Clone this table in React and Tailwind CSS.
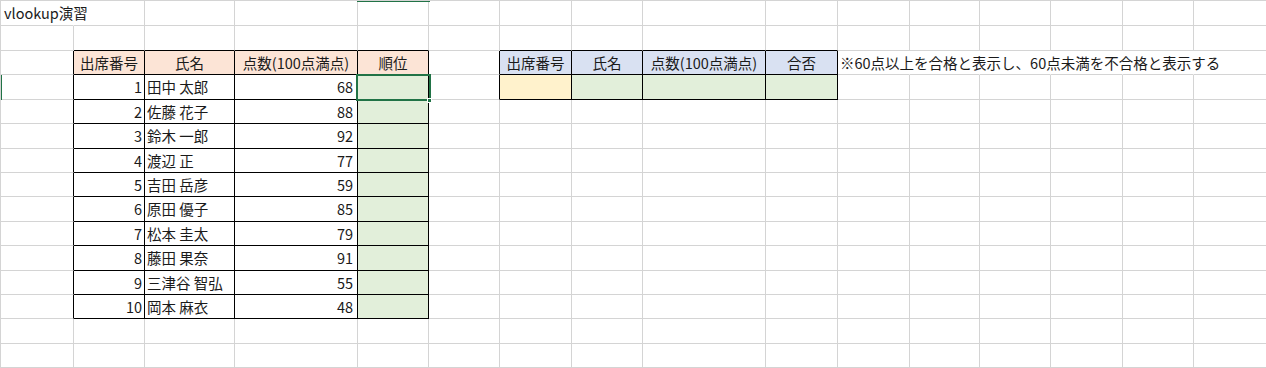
import React from 'react';

const ROWS = 15;
const COLS = 16;

const students = [
  [1, '田中 太郎', 68],
  [2, '佐藤 花子', 88],
  [3, '鈴木 一郎', 92],
  [4, '渡辺 正', 77],
  [5, '吉田 岳彦', 59],
  [6, '原田 優子', 85],
  [7, '松本 圭太', 79],
  [8, '藤田 果奈', 91],
  [9, '三津谷 智弘', 55],
  [10, '岡本 麻衣', 48],
];

// cell contents keyed by "row-col"
const cells = {};
cells['0-0'] = { t: 'vlookup演習', cls: 'justify-start pl-[3px]' };

['出席番号', '氏名', '点数(100点満点)', '順位'].forEach((h, i) => {
  cells[`2-${i + 1}`] = { t: h, cls: 'justify-center bg-[#fce4d6]' };
});
students.forEach(([no, name, score], i) => {
  const r = 3 + i;
  cells[`${r}-1`] = { t: no, cls: 'justify-end pr-[2px]' };
  cells[`${r}-2`] = { t: name, cls: 'justify-start pl-[2px]' };
  cells[`${r}-3`] = { t: score, cls: 'justify-end pr-[4px]' };
  cells[`${r}-4`] = { t: '', cls: 'bg-[#e2efda]' };
});

['出席番号', '氏名', '点数(100点満点)', '合否'].forEach((h, i) => {
  cells[`2-${i + 6}`] = { t: h, cls: 'justify-center bg-[#d9e1f2]' };
});
cells['3-6'] = { t: '', cls: 'bg-[#fff2cc]' };
cells['3-7'] = { t: '', cls: 'bg-[#e2efda]' };
cells['3-8'] = { t: '', cls: 'bg-[#e2efda]' };
cells['3-9'] = { t: '', cls: 'bg-[#e2efda]' };
cells['2-10'] = { t: '※60点以上を合格と表示し、60点未満を不合格と表示する', cls: 'justify-start pl-[2px]' };

const inTable = (r, c) =>
  (r >= 2 && r <= 12 && c >= 1 && c <= 4) || (r >= 2 && r <= 3 && c >= 6 && c <= 9);

// gridlines hidden where text spills into the next cell
const spills = (r, c) => (r === 0 && c === 0) || (r === 2 && c >= 10 && c <= 14);

function Cell({ r, c }) {
  const data = cells[`${r}-${c}`] || { t: '', cls: '' };
  const right = inTable(r, c) || inTable(r, c + 1)
    ? 'border-r-black'
    : spills(r, c) ? 'border-r-transparent' : 'border-r-[#d4d4d4]';
  const bottom = inTable(r, c) || inTable(r + 1, c) ? 'border-b-black' : 'border-b-[#d4d4d4]';
  return (
    <div className={`flex items-center whitespace-nowrap overflow-visible border-r border-b ${right} ${bottom} ${data.cls}`}>
      <span className="leading-none pt-[1px]">{data.t}</span>
    </div>
  );
}

export default function App() {
  const grid = [];
  for (let r = 0; r < ROWS; r++) {
    for (let c = 0; c < COLS; c++) {
      grid.push(<Cell key={`${r}-${c}`} r={r} c={c} />);
    }
  }

  return (
    <div className="relative w-[1266px] h-[368px] overflow-hidden bg-white border-l border-t border-[#d4d4d4] text-[14.5px] text-[#1a1a1a] font-['Noto_Sans_CJK_JP','Noto_Sans_CJK_SC',sans-serif]">
      <div className="grid grid-cols-[73px_71px_90px_123px_71px_71px_72px_71px_123px_72px_72px_70px_71px_72px_71px_73px] grid-rows-[25px_25px_24px_25px_24px_25px_24px_24px_25px_24px_25px_24px_24px_25px_24px]">
        {grid}
      </div>

      {/* column / row header highlight of the active cell */}
      <div className="absolute left-[356px] top-[-1px] w-[73px] h-[2px] bg-[#217346]" />
      <div className="absolute left-[-1px] top-[74px] w-[2px] h-[25px] bg-[#217346]" />

      {/* active cell E4 */}
      <div className="absolute left-[355px] top-[73px] w-[75px] h-[27px] border-2 border-[#217346]" />
      <div className="absolute left-[426px] top-[97px] w-[5px] h-[5px] bg-[#217346] border border-white" />
    </div>
  );
}
